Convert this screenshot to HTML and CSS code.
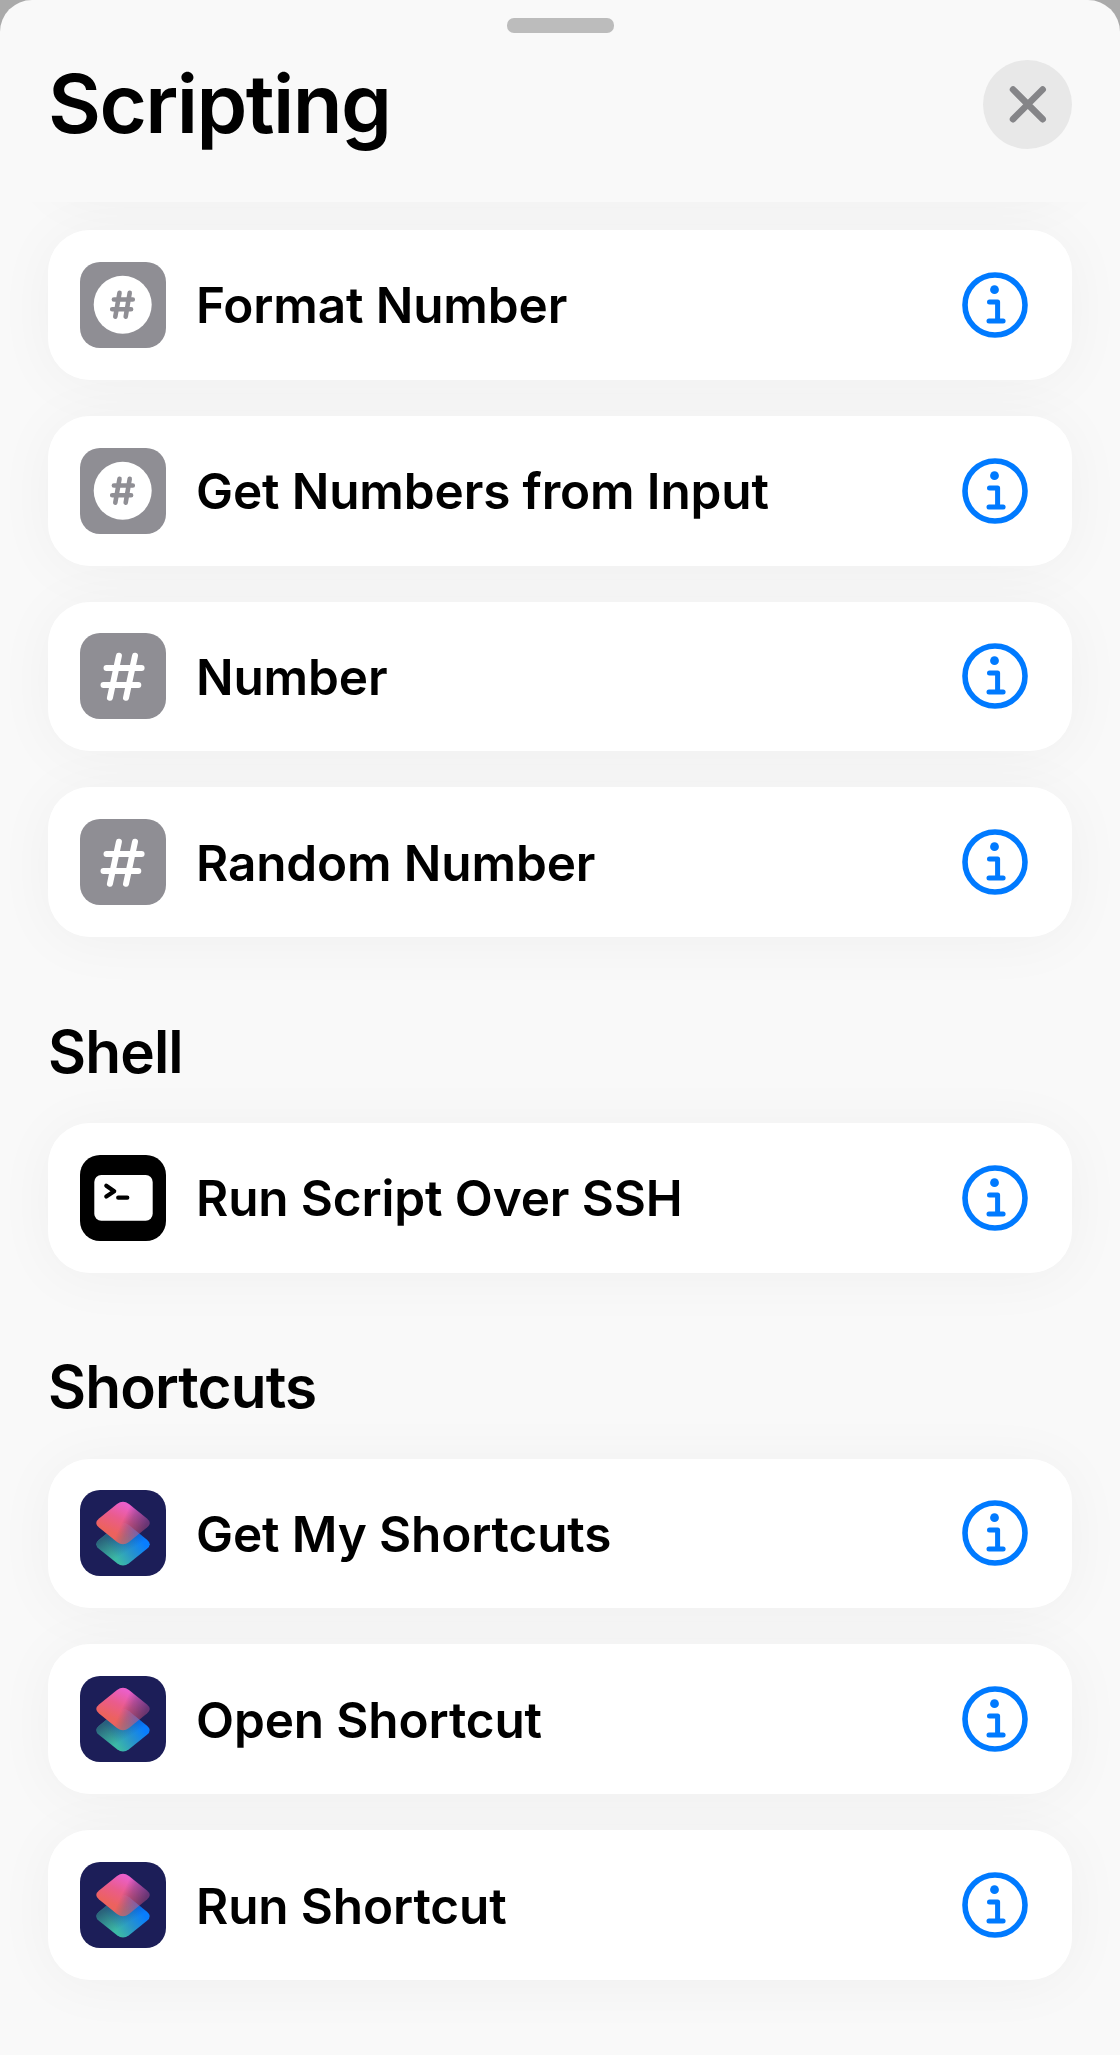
FILE: index.html
```html
<!DOCTYPE html>
<html lang="en">
<head>
<meta charset="utf-8">
<title>Scripting</title>
<link rel="stylesheet" href="styles.css">
</head>
<body>
<svg class="sprite" aria-hidden="true">
  <defs>
    <linearGradient id="pink" gradientUnits="userSpaceOnUse" x1="32" y1="42" x2="45" y2="14">
      <stop offset="0" stop-color="#ec625e"/><stop offset=".5" stop-color="#ea5c8c"/><stop offset="1" stop-color="#eb5fca"/>
    </linearGradient>
    <linearGradient id="fade" gradientUnits="userSpaceOnUse" x1="43" y1="30" x2="64" y2="40">
      <stop offset="0" stop-color="#fff"/><stop offset=".35" stop-color="#b8b8b8"/><stop offset="1" stop-color="#606060"/>
    </linearGradient>
    <mask id="fade-mask" maskUnits="userSpaceOnUse" x="0" y="0" width="86" height="86"><rect width="86" height="86" fill="url(#fade)"/></mask>
    <linearGradient id="blue" gradientUnits="userSpaceOnUse" x1="36" y1="68" x2="62" y2="50">
      <stop offset="0" stop-color="#3cb9a6"/><stop offset=".5" stop-color="#2793cc"/><stop offset="1" stop-color="#087dff"/>
    </linearGradient>
    <linearGradient id="shade" gradientUnits="userSpaceOnUse" x1="28" y1="46" x2="40" y2="66">
      <stop offset="0" stop-color="#1c1e58" stop-opacity=".55"/><stop offset="1" stop-color="#1c1e58" stop-opacity="0"/>
    </linearGradient>
  </defs>
  <symbol id="hash-circle" viewBox="0 0 86 86">
    <circle cx="42.7" cy="42.7" r="29" fill="#fff"/>
    <path d="M39.5 30.8 35.3 54.7M49.7 30.8 45.7 54.7M33.9 37.5H52.8M32.2 47.3H51.1" fill="none" stroke="#8f8e94" stroke-width="4.6" stroke-linecap="round"/>
  </symbol>
  <symbol id="hash" viewBox="0 0 86 86">
    <path d="M38.9 22.8 29.9 64.8M55 22.8 46 64.8M26.5 35.1H61.6M23.5 51.9H58.3" fill="none" stroke="#fff" stroke-width="6" stroke-linecap="round"/>
  </symbol>
  <symbol id="terminal" viewBox="0 0 86 86">
    <rect x="14.3" y="20" width="58.4" height="45.8" rx="7" fill="#fff"/>
    <path d="M26.3 30.8 34.2 36.2 26.3 41.5M38.2 42.7H47.3" fill="none" stroke="#000" stroke-width="4.2" stroke-linecap="round" stroke-linejoin="round"/>
  </symbol>
  <symbol id="layers" viewBox="0 0 86 86">
    <path d="M37 35.3Q43 30.8 49 35.3L67 49.8Q72.5 54.3 67 58.8L49 73.3Q43 77.8 37 73.3L19 58.8Q13.5 54.3 19 49.8Z" fill="url(#blue)"/>
    <path d="M37 35.3Q43 30.8 49 35.3L67 49.8Q72.5 54.3 67 58.8L49 73.3Q43 77.8 37 73.3L19 58.8Q13.5 54.3 19 49.8Z" fill="url(#shade)"/>
    <path d="M37 14Q43 9.5 49 14L67 28.5Q72.5 33 67 37.5L49 52Q43 56.5 37 52L19 37.5Q13.5 33 19 28.5Z" fill="url(#pink)" mask="url(#fade-mask)"/>
  </symbol>
  <symbol id="info" viewBox="0 0 66 66">
    <circle cx="33" cy="33" r="30" fill="none" stroke="#007aff" stroke-width="5.6"/>
    <circle cx="32.5" cy="17.7" r="4.4" fill="#007aff"/>
    <path d="M27.5 30H35.6V49M27 49H41.1" fill="none" stroke="#007aff" stroke-width="5" stroke-linecap="round" stroke-linejoin="round"/>
  </symbol>
</svg>
<main class="sheet">
  <header class="header">
    <div class="grabber"></div>
    <div class="title-bar">
      <h1 class="title">Scripting</h1>
      <button class="close" aria-label="Close"><svg class="close-icon" viewBox="0 0 90 90"><path d="M30.2 29.7 60 59.5M60 29.7 30.2 59.5"/></svg></button>
    </div>
  </header>
  <div class="content">
    <section class="group">
      <div class="card scrolled-out"></div>
      <div class="card"><svg class="icon gray"><use href="#hash-circle"/></svg><span class="label">Format Number</span><svg class="info"><use href="#info"/></svg></div>
      <div class="card"><svg class="icon gray"><use href="#hash-circle"/></svg><span class="label">Get Numbers from Input</span><svg class="info"><use href="#info"/></svg></div>
      <div class="card"><svg class="icon gray"><use href="#hash"/></svg><span class="label">Number</span><svg class="info"><use href="#info"/></svg></div>
      <div class="card"><svg class="icon gray"><use href="#hash"/></svg><span class="label">Random Number</span><svg class="info"><use href="#info"/></svg></div>
    </section>
    <h2 class="heading">Shell</h2>
    <section class="group">
      <div class="card"><svg class="icon black"><use href="#terminal"/></svg><span class="label">Run Script Over SSH</span><svg class="info"><use href="#info"/></svg></div>
    </section>
    <h2 class="heading">Shortcuts</h2>
    <section class="group">
      <div class="card"><svg class="icon navy"><use href="#layers"/></svg><span class="label">Get My Shortcuts</span><svg class="info"><use href="#info"/></svg></div>
      <div class="card"><svg class="icon navy"><use href="#layers"/></svg><span class="label">Open Shortcut</span><svg class="info"><use href="#info"/></svg></div>
      <div class="card"><svg class="icon navy"><use href="#layers"/></svg><span class="label">Run Shortcut</span><svg class="info"><use href="#info"/></svg></div>
    </section>
  </div>
</main>
</body>
</html>
```
FILE: styles.css
```css
* { box-sizing: border-box; }
body {
  margin: 0;
  background: #aaa;
  color: #000;
  font-family: Inter, "Liberation Sans", sans-serif;
}
.sprite { position: absolute; width: 0; height: 0; }
.sheet {
  height: 2055px;
  overflow: hidden;
  background: #f9f9f9;
  border-radius: 32px 32px 0 0;
}
.header {
  display: flex;
  flex-direction: column;
  align-items: center;
  height: 202px;
  padding-top: 18px;
}
.grabber { width: 107px; height: 15px; border-radius: 7px; background: #bcbcbc; }
.title-bar {
  display: flex;
  justify-content: space-between;
  align-items: center;
  width: 100%;
  margin-top: 26.5px;
  padding: 0 48px;
}
.title { margin: 0; font-size: 81.5px; font-weight: 600; line-height: 88px; letter-spacing: -1.6px; }
.close { width: 89.5px; height: 89.5px; padding: 0; border: 0; border-radius: 50%; background: #e8e8e8; }
.close-icon { display: block; width: 89.5px; height: 89.5px; fill: none; stroke: #858588; stroke-width: 6.6; stroke-linecap: round; }
.content {
  position: relative;
  z-index: 0;
  height: 1853px;
  padding: 28px 48px 0;
  overflow: hidden;
}
.group { display: flex; flex-direction: column; gap: 36px; }
.card {
  position: relative;
  display: flex;
  align-items: center;
  height: 149.8px;
  padding: 0 44.5px 0 32px;
  border-radius: 42px;
  background: #fff;
}
/* Shadows sit beneath every card, so neighbours stay pure white */
.card::before {
  content: "";
  position: absolute;
  inset: 0;
  z-index: -1;
  border-radius: 42px;
  box-shadow: 0 4px 60px rgba(0, 0, 0, .045);
}
/* Card above the visible area: only its shadow reaches the list */
.scrolled-out { margin-top: -185.8px; }
.icon { flex: none; width: 86px; height: 86px; border-radius: 20px; }
.gray { background: #8f8e94; }
.black { background: #000; }
.navy { background: #1c1e58; }
.label { flex: 1; margin-left: 30px; padding-top: 1px; font-size: 49.5px; font-weight: 600; line-height: 60px; letter-spacing: -.14px; white-space: nowrap; }
.info { flex: none; width: 66px; height: 66px; }
.heading { margin: 0; height: 185.8px; padding-top: 79.4px; font-size: 58.5px; font-weight: 600; line-height: 70px; letter-spacing: -.85px; }
```
